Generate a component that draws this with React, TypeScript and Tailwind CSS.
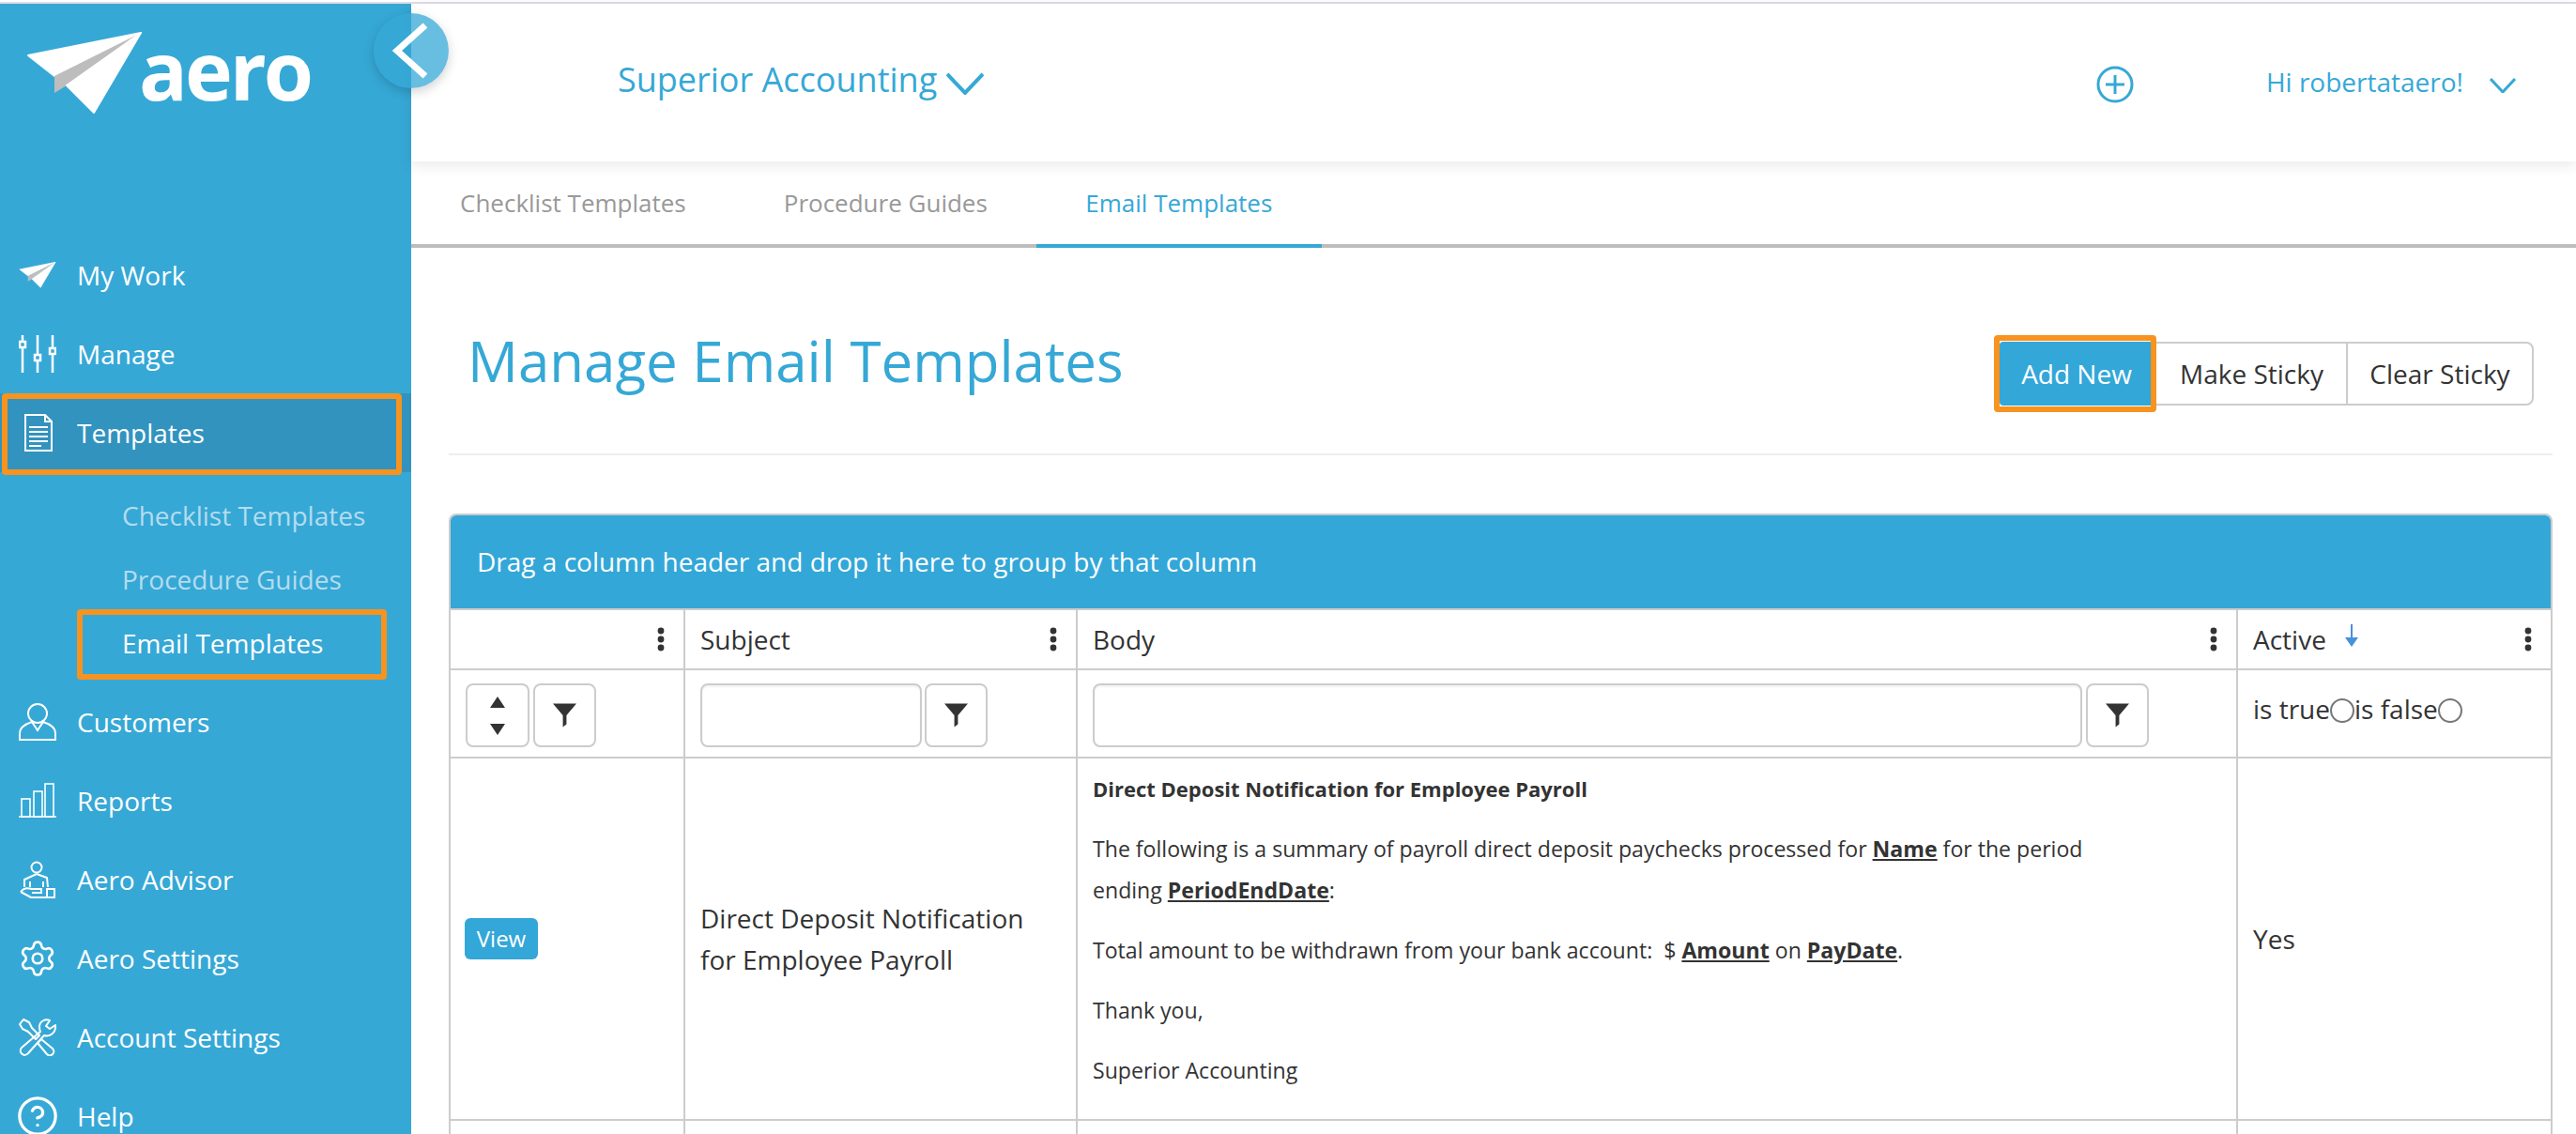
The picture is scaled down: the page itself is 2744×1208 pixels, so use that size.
import { Settings, CircleHelp } from 'lucide-react'

const font = { fontFamily: '"Open Sans", sans-serif' }

function Plane({ className }: { className: string }) {
  return (
    <svg viewBox="0 0 124 88" className={className}>
      <path d="M2 25 L122 1 L30 47 Z" fill="#fff" stroke="#fff" strokeWidth="2" strokeLinejoin="round" />
      <path d="M30 47 L122 1 L43 57 L30 65 Z" fill="#bdbdbd" />
      <path d="M43 57 L122 1 L72 86 Z" fill="#fff" stroke="#fff" strokeWidth="2" strokeLinejoin="round" />
    </svg>
  )
}

function Sliders() {
  return (
    <svg viewBox="0 0 40 40" className="w-10 h-10 text-white" fill="none" stroke="currentColor" strokeWidth="2.5">
      <path d="M4 0V40M20 0V40M36 0V40" />
      <rect x="1" y="7" width="6" height="6" fill="#36a8d6" />
      <rect x="17" y="21" width="6" height="6" fill="#36a8d6" />
      <rect x="33" y="14" width="6" height="6" fill="#36a8d6" />
    </svg>
  )
}

function Doc() {
  return (
    <svg viewBox="0 0 40 40" className="w-10 h-10 text-white" fill="none" stroke="currentColor" strokeWidth="2">
      <path d="M7 1H28L35 8V39H7ZM28 1V8H35" />
      <path d="M11 14H31M11 19H31M11 24H31M11 29H31M11 34H24" />
    </svg>
  )
}

function Customer() {
  return (
    <svg viewBox="0 0 40 40" className="w-10 h-10 text-white" fill="none" stroke="currentColor" strokeWidth="2">
      <circle cx="20" cy="11" r="10" />
      <path d="M1 39V32C1 26 8 22 14 20L20 29L26 20C32 22 39 26 39 32V39Z" />
    </svg>
  )
}

function Bars() {
  return (
    <svg viewBox="0 0 40 40" className="w-10 h-10 text-white" fill="none" stroke="currentColor" strokeWidth="1.6">
      <path d="M0 37H40" />
      <rect x="3" y="18" width="9" height="19" />
      <rect x="16" y="10" width="9" height="27" />
      <rect x="28" y="2" width="9" height="35" />
    </svg>
  )
}

function Advisor() {
  return (
    <svg viewBox="0 0 40 40" className="w-10 h-10 text-white" fill="none" stroke="currentColor" strokeWidth="2">
      <circle cx="19" cy="7" r="5.5" />
      <path d="M19 14L6 20V28M19 14L30 18L31 28M12 22V28M26 22V28" />
      <path d="M2 33C6 28 10 29 14 30H24V34H14M2 33L13 39H30V30H38V39H30" />
    </svg>
  )
}

function Tools() {
  return (
    <svg viewBox="0 0 40 40" className="w-10 h-10 text-white" fill="none" stroke="currentColor" strokeWidth="2" strokeLinejoin="round">
      <path d="M1 6L5 1L11 4L14 10L22 18L18 22L10 14L4 11Z" />
      <path d="M24 22L36 32C40 36 34 42 30 38L20 26Z" />
      <path d="M39 7L33 11L29 8L33 2C28 0 22 3 22 9C22 11 22 12 23 14L3 31C-1 36 6 42 10 37L27 18C33 20 40 15 39 7Z" />
    </svg>
  )
}

function Funnel() {
  return (
    <svg viewBox="0 0 26 26" className="w-[25px] h-[26px] text-[#333]" fill="currentColor">
      <path d="M0 0H26L15 13V23L11 26V13Z" />
    </svg>
  )
}

function Kebab() {
  return (
    <svg viewBox="0 0 8 26" className="w-2 h-[26px] text-[#333]" fill="currentColor">
      <circle cx="4" cy="4" r="3.4" />
      <circle cx="4" cy="13" r="3.4" />
      <circle cx="4" cy="22" r="3.4" />
    </svg>
  )
}

function FilterButton() {
  return (
    <div className="w-[67px] h-[68px] shrink-0 flex items-center justify-center rounded-lg border-2 border-[#ccc] bg-white">
      <Funnel />
    </div>
  )
}

function Radio() {
  return <span className="inline-block w-[26px] h-[26px] rounded-full border-2 border-[#777] bg-white shrink-0 mt-2" />
}

function NavRow({ icon, label }: { icon: React.ReactNode; label: string }) {
  return (
    <div className="h-[84px] flex items-center pl-5">
      <div className="w-10 h-10 flex items-center justify-center shrink-0">{icon}</div>
      <span className="ml-[22px] text-[28px] text-white">{label}</span>
    </div>
  )
}

function Sidebar() {
  return (
    <aside className="w-[438px] shrink-0 bg-[#36a8d6] h-[1204px] overflow-hidden">
      <div className="h-[247px] pl-7 pt-[30px] flex items-start">
        <Plane className="w-[124px] h-[88px] shrink-0" />
        <span className="-ml-1 mt-[-15px] text-[86px] leading-[110px] font-bold text-white tracking-[-3px]">aero</span>
      </div>
      <NavRow icon={<Plane className="w-10 h-7" />} label="My Work" />
      <NavRow icon={<Sliders />} label="Manage" />
      <div className="relative">
        <div className="h-[84px] flex items-center pl-5 bg-[#3293bf]">
          <div className="w-10 h-10 flex items-center justify-center shrink-0"><Doc /></div>
          <span className="ml-[22px] text-[28px] text-white">Templates</span>
        </div>
        <div className="absolute left-0.5 top-0 w-[426px] h-[87px] border-[6px] border-[#f7931e] rounded-sm" />
      </div>
      <div className="pt-[12px] pb-[8px]">
        <div className="h-[68px] flex items-center pl-[130px] text-[28px] text-[#b4dcee]">Checklist Templates</div>
        <div className="h-[68px] flex items-center pl-[130px] text-[28px] text-[#b4dcee]">Procedure Guides</div>
        <div className="relative h-[68px] flex items-center pl-[130px] text-[28px] text-white">
          Email Templates
          <div className="absolute left-[82px] top-[-2px] w-[330px] h-[75px] border-[6px] border-[#f7931e] rounded-sm" />
        </div>
      </div>
      <NavRow icon={<Customer />} label="Customers" />
      <NavRow icon={<Bars />} label="Reports" />
      <NavRow icon={<Advisor />} label="Aero Advisor" />
      <NavRow icon={<Settings size={42} strokeWidth={1.5} className="text-white shrink-0" />} label="Aero Settings" />
      <NavRow icon={<Tools />} label="Account Settings" />
      <NavRow icon={<CircleHelp size={46} strokeWidth={1.7} className="text-white shrink-0" />} label="Help" />
    </aside>
  )
}

function TopBar() {
  return (
    <header className="h-[168px] shrink-0 relative z-10 bg-white shadow-[0_4px_14px_rgba(0,0,0,0.09)] flex items-start text-[#36a8d6]">
      <div className="ml-[220px] mt-[56px] flex items-center">
        <span className="text-[36px] leading-[50px]">Superior Accounting</span>
        <svg viewBox="0 0 40 24" className="w-10 h-6 ml-2.5 mt-2" fill="none" stroke="currentColor" strokeWidth="4">
          <path d="M1 2L20 22L39 2" />
        </svg>
      </div>
      <div className="ml-auto mr-[64px] mt-[66px] flex items-start">
        <svg viewBox="0 0 40 40" className="w-10 h-10" fill="none" stroke="currentColor" strokeWidth="3">
          <circle cx="20" cy="20" r="18" />
          <path d="M20 10V30M10 20H30" />
        </svg>
        <span className="ml-[141px] text-[28px] leading-[38px] -mt-[2px]">Hi robertataero!</span>
        <svg viewBox="0 0 28 16" className="w-7 h-4 ml-7 mt-[13px]" fill="none" stroke="currentColor" strokeWidth="3">
          <path d="M1 1L14 15L27 1" />
        </svg>
      </div>
    </header>
  )
}

function Tabs() {
  return (
    <nav className="h-[92px] shrink-0 flex border-b-4 border-[#bdbdbd] text-[26px]">
      <div className="px-[52px] pt-[25px] text-[#999]">Checklist Templates</div>
      <div className="px-[52px] pt-[25px] text-[#999]">Procedure Guides</div>
      <div className="relative w-[304px] pt-[25px] text-center text-[#36a8d6]">
        Email Templates
        <div className="absolute left-0 right-0 bottom-[-4px] h-1 bg-[#36a8d6]" />
      </div>
    </nav>
  )
}

function Toolbar() {
  return (
    <div className="ml-10 mr-[25px] h-[221px] border-b-2 border-[#eee] flex items-start justify-between shrink-0">
      <h1 className="ml-[20px] mt-[80px] text-[60px] leading-[80px] text-[#36a8d6]">Manage Email Templates</h1>
      <div className="mt-[100px] mr-5 flex h-[68px] text-[28px] text-[#333]">
        <div className="relative w-[162px] pl-0.5 bg-[#33a7d8] text-white flex items-center justify-center rounded-l">
          Add New
          <div className="absolute -left-1.5 -top-[7px] -right-[5px] -bottom-[7px] border-[6px] border-[#f7931e] rounded-sm" />
        </div>
        <div className="w-[207px] pl-1.5 flex items-center justify-center border-y-2 border-[#ccc]">Make Sticky</div>
        <div className="w-[200px] flex items-center justify-center border-2 border-[#ccc] rounded-r-lg">Clear Sticky</div>
      </div>
    </div>
  )
}

function HeadCell({ children, last }: { children?: React.ReactNode; last?: boolean }) {
  return (
    <div className={`h-[64px] border-b-2 border-[#ccc] flex items-center pl-4 pr-5 text-[28px] text-[#333] ${last ? '' : 'border-r-2'}`}>
      {children}
      <span className="ml-auto"><Kebab /></span>
    </div>
  )
}

function Table() {
  return (
    <section className="ml-[40px] mr-[25px] mt-[62px] border-x-2 border-t-2 border-[#ccc] rounded-t-lg shrink-0">
      <div className="h-[101px] bg-[#33a7d8] border-b-2 border-[#ccc] rounded-t-md flex items-center pl-[28px] pb-0.5 text-[28px] text-white">
        Drag a column header and drop it here to group by that column
      </div>
      <div className="grid grid-cols-[250px_418px_1236px_333px]">
        <HeadCell />
        <HeadCell>Subject</HeadCell>
        <HeadCell>Body</HeadCell>
        <HeadCell last>
          Active
          <svg viewBox="0 0 14 24" className="w-3.5 h-6 ml-5 -mt-2 text-[#4a90d9]" fill="currentColor">
            <path d="M6 0H8V14H14L7 24L0 14H6Z" />
          </svg>
        </HeadCell>

        <div className="h-[94px] border-b-2 border-r-2 border-[#ccc] flex items-start pl-4 pt-[14px] gap-1">
          <div className="w-[68px] h-[68px] rounded-lg border-2 border-[#ccc] flex flex-col items-center justify-center gap-[17px]">
            <div className="w-0 h-0 border-x-[8px] border-x-transparent border-b-[12px] border-b-[#333]" />
            <div className="w-0 h-0 border-x-[8px] border-x-transparent border-t-[12px] border-t-[#333]" />
          </div>
          <FilterButton />
        </div>
        <div className="h-[94px] border-b-2 border-r-2 border-[#ccc] flex items-start pl-4 pt-[14px] gap-[3px]">
          <div className="w-[236px] h-[68px] rounded-lg border-2 border-[#ccc] shadow-[inset_0_2px_2px_rgba(0,0,0,0.05)]" />
          <FilterButton />
        </div>
        <div className="h-[94px] border-b-2 border-r-2 border-[#ccc] flex items-start pl-4 pt-[14px] gap-1">
          <div className="w-[1054px] h-[68px] rounded-lg border-2 border-[#ccc] shadow-[inset_0_2px_2px_rgba(0,0,0,0.05)]" />
          <FilterButton />
        </div>
        <div className="h-[94px] border-b-2 border-[#ccc] flex items-start pl-4 pt-[22px] text-[28px] leading-[38px] text-[#333]">
          is true<Radio />is false<Radio />
        </div>

        <div className="h-[386px] border-b-2 border-r-2 border-[#ccc] flex items-center pl-[15px]">
          <div className="w-[78px] h-[44px] rounded-md bg-[#33a7d8] text-white text-[24px] flex items-center justify-center">View</div>
        </div>
        <div className="h-[386px] border-b-2 border-r-2 border-[#ccc] flex items-center pl-4 text-[28px] leading-[44px] text-[#333]">
          <p>Direct Deposit Notification<br />for Employee Payroll</p>
        </div>
        <div className="h-[386px] border-b-2 border-r-2 border-[#ccc] pl-4 pt-[10px] text-[23.1px] leading-[44px] text-[#333]">
          <p className="font-bold text-[22px]">Direct Deposit Notification for Employee Payroll</p>
          <p className="mt-5">
            The following is a summary of payroll direct deposit paychecks processed for <b className="underline">Name</b> for the period<br />
            ending <b className="underline">PeriodEndDate</b>:
          </p>
          <p className="mt-5">
            Total amount to be withdrawn from your bank account:&nbsp; $ <b className="underline">Amount</b> on <b className="underline">PayDate</b>.
          </p>
          <p className="mt-5">Thank you,</p>
          <p className="mt-5">Superior Accounting</p>
        </div>
        <div className="h-[386px] border-b-2 border-[#ccc] flex items-center pl-4 text-[28px] text-[#333]">Yes</div>

        <div className="h-[40px] border-r-2 border-[#ccc]" />
        <div className="h-[40px] border-r-2 border-[#ccc]" />
        <div className="h-[40px] border-r-2 border-[#ccc]" />
        <div className="h-[40px]" />
      </div>
    </section>
  )
}

export default function App() {
  return (
    <div style={font} className="relative w-[2744px] h-[1208px] overflow-hidden bg-white">
      <div className="h-1 border-t-2 border-white bg-[#dfdde8]" />
      <div className="flex">
        <Sidebar />
        <main className="flex-1 min-w-0 flex flex-col">
          <TopBar />
          <Tabs />
          <Toolbar />
          <Table />
        </main>
      </div>
      {/* collapse toggle sits over the sidebar edge */}
      <div className="absolute z-20 left-[398px] top-[14px] w-20 h-20 rounded-full bg-[#36a8d6]/75 shadow-[0_4px_12px_rgba(0,0,0,0.18)] flex items-center justify-center">
        <svg viewBox="0 0 40 60" className="w-10 h-[60px] text-white" fill="none" stroke="currentColor" strokeWidth="7">
          <path d="M35 3L5 30L35 57" />
        </svg>
      </div>
    </div>
  )
}
